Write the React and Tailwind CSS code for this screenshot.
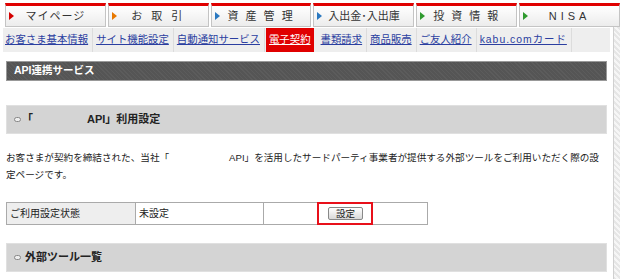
import React from 'react';

// top menu tabs
const tabs = [
  { label: 'マイページ', color: 'border-l-[#d40000]', spacing: 'tracking-[1px]' },
  { label: 'お 取 引', color: 'border-l-[#e87800]', spacing: 'tracking-[3px]' },
  { label: '資 産 管 理', color: 'border-l-[#2a78c0]', spacing: 'tracking-[2px]' },
  { label: '入出金･入出庫', color: 'border-l-[#2a78c0]', spacing: 'tracking-[0px]' },
  { label: '投 資 情 報', color: 'border-l-[#2f9a2f]', spacing: 'tracking-[2px]' },
  { label: 'NISA', color: 'border-l-[#2f9a2f]', spacing: 'tracking-[4px]' },
];

const subLinks = [
  'お客さま基本情報',
  'サイト機能設定',
  '自動通知サービス',
  '電子契約',
  '書類請求',
  '商品販売',
  'ご友人紹介',
  'kabu.comカード',
];

const font = { fontFamily: '"Liberation Sans", "Noto Sans CJK JP", sans-serif' };

const Bullet = () => (
  <span className="inline-block w-[7px] h-[5px] rounded-[3px] border border-[#888] bg-[#eee] mr-[4px]" />
);

const SectionBar = ({ children, className = '' }) => (
  <div
    className={`mx-[3px] h-[29px] bg-[#d4d4d4] border border-[#e0e0e0] flex items-center pl-[7px] text-[11px] font-bold text-[#222] ${className}`}
  >
    <Bullet />
    {children}
  </div>
);

export default function App() {
  return (
    <div className="w-[620px] h-[279px] bg-white overflow-hidden flex flex-col" style={font}>
      {/* tabs */}
      <div className="flex gap-[2px] pl-[5px] pt-[3px]">
        {tabs.map((t) => (
          <div
            key={t.label}
            className="w-[101px] h-[24px] border-t-[3px] border-t-[#e00000] border-x border-b border-x-[#c4c4c4] border-b-[#c4c4c4] bg-gradient-to-b from-white to-[#ececec] flex items-center relative"
          >
            <span
              className={`absolute left-[3px] top-[6px] w-0 h-0 border-y-[4px] border-y-transparent border-l-[5px] ${t.color}`}
            />
            <span className={`flex-1 text-center text-[11px] text-[#333] ${t.spacing}`}>{t.label}</span>
          </div>
        ))}
      </div>

      <div className="flex flex-1">
        <div className="w-[610px]">
          {/* sub navigation */}
          <div className="ml-[3px] mt-[1px] h-[24px] bg-[#eeeeee] flex items-center">
            {subLinks.map((l) =>
              l === '電子契約' ? (
                <span
                  key={l}
                  className="h-full flex items-center px-[3px] bg-[#e00000] text-white underline text-[10.4px] mr-[5px]"
                >
                  {l}
                </span>
              ) : (
                <span
                  key={l}
                  className="h-full flex items-center pl-[2px] pr-[4px] mr-[1px] border-r border-r-[#dcdcdc] text-[#2b3ea0] underline text-[10.4px]"
                  style={l.startsWith('kabu') ? { letterSpacing: '1px' } : undefined}
                >
                  {l}
                </span>
              )
            )}
          </div>

          {/* page title */}
          <div
            className="mt-[9px] mx-[3px] ml-[6px] h-[20px] border border-[#999] flex items-center pl-[7px] text-[10.5px] font-bold text-white"
            style={{
              background:
                'repeating-linear-gradient(45deg, #555 0px, #555 2px, #5c5c5c 2px, #5c5c5c 3px)',
            }}
          >
            API連携サービス
          </div>

          <SectionBar className="mt-[24px] ml-[6px]">
            <span className="-ml-[3px]">「</span>
            <span className="inline-block w-[54px]" />
            <span>API」利用設定</span>
          </SectionBar>

          <p className="mt-[15px] ml-[6px] text-[9.6px] leading-[17px] text-[#222] whitespace-nowrap">
            お客さまが契約を締結された、当社「<span className="inline-block w-[60px]" />API」を活用したサードパーティ事業者が提供する外部ツールをご利用いただく際の設
            <br />
            定ページです。
          </p>

          {/* settings table */}
          <div className="mt-[19px] ml-[6px] flex w-[422px] h-[23px] border border-[#aaa] text-[10px] text-[#222]">
            <div className="w-[129px] bg-[#eeeeee] border-r border-[#aaa] flex items-center pl-[3px]">
              ご利用設定状態
            </div>
            <div className="w-[128px] border-r border-[#aaa] flex items-center pl-[3px]">未設定</div>
            <div className="flex-1 flex items-center justify-center relative">
              <span className="absolute left-[53px] top-[-1px] w-[56px] h-[23px] border-[2px] border-[#e8101a]" />
              <button className="h-[13px] px-[7px] text-[9.5px] leading-none rounded-[2px] border border-[#888] bg-gradient-to-b from-white to-[#d8d8d8] text-[#222]">
                設定
              </button>
            </div>
          </div>

          <SectionBar className="mt-[18px] ml-[6px]">外部ツール一覧</SectionBar>
        </div>

        {/* right side strip */}
        <div
          className="ml-[3px] w-[7px] border-l border-[#d0d0d0]"
          style={{
            background:
              'repeating-linear-gradient(45deg, #e6e6e6 0px, #e6e6e6 2px, #f6f6f6 2px, #f6f6f6 4px)',
          }}
        />
      </div>
    </div>
  );
}
